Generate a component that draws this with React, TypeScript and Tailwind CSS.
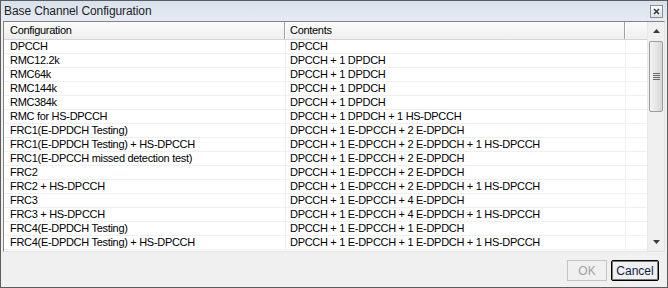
const rows: [string, string][] = [
  ["DPCCH", "DPCCH"],
  ["RMC12.2k", "DPCCH + 1 DPDCH"],
  ["RMC64k", "DPCCH + 1 DPDCH"],
  ["RMC144k", "DPCCH + 1 DPDCH"],
  ["RMC384k", "DPCCH + 1 DPDCH"],
  ["RMC for HS-DPCCH", "DPCCH + 1 DPDCH + 1 HS-DPCCH"],
  ["FRC1(E-DPDCH Testing)", "DPCCH + 1 E-DPCCH + 2 E-DPDCH"],
  ["FRC1(E-DPDCH Testing) + HS-DPCCH", "DPCCH + 1 E-DPCCH + 2 E-DPDCH + 1 HS-DPCCH"],
  ["FRC1(E-DPCCH missed detection test)", "DPCCH + 1 E-DPCCH + 2 E-DPDCH"],
  ["FRC2", "DPCCH + 1 E-DPCCH + 2 E-DPDCH"],
  ["FRC2 + HS-DPCCH", "DPCCH + 1 E-DPCCH + 2 E-DPDCH + 1 HS-DPCCH"],
  ["FRC3", "DPCCH + 1 E-DPCCH + 4 E-DPDCH"],
  ["FRC3 + HS-DPCCH", "DPCCH + 1 E-DPCCH + 4 E-DPDCH + 1 HS-DPCCH"],
  ["FRC4(E-DPDCH Testing)", "DPCCH + 1 E-DPCCH + 1 E-DPDCH"],
  ["FRC4(E-DPDCH Testing) + HS-DPCCH", "DPCCH + 1 E-DPCCH + 1 E-DPDCH + 1 HS-DPCCH"],
];

function Scrollbar() {
  return (
    <div className="flex w-[17px] shrink-0 flex-col bg-[#f0f0f0] border-l border-[#e8e8e8]">
      <div className="flex h-[18px] items-center justify-center">
        <svg width="7" height="4" viewBox="0 0 7 4">
          <path d="M3.5 0 L7 4 L0 4 Z" fill="#3c3c3c" />
        </svg>
      </div>
      <div className="mx-[1px] mt-[1px] flex h-[71px] items-center justify-center rounded-[2px] border border-[#9c9c9c] bg-gradient-to-r from-[#f4f4f4] via-[#e6e6e6] to-[#d6d6d6]">
        <div className="flex flex-col gap-[1px]">
          <div className="h-[1px] w-[7px] bg-[#6a6a6a]" />
          <div className="h-[1px] w-[7px] bg-[#6a6a6a]" />
          <div className="h-[1px] w-[7px] bg-[#6a6a6a]" />
          <div className="h-[1px] w-[7px] bg-[#6a6a6a]" />
        </div>
      </div>
      <div className="flex-1" />
      <div className="flex h-[18px] items-center justify-center">
        <svg width="7" height="4" viewBox="0 0 7 4">
          <path d="M0 0 L7 0 L3.5 4 Z" fill="#3c3c3c" />
        </svg>
      </div>
    </div>
  );
}

export default function App() {
  return (
    <div
      className="flex h-[288px] w-[668px] flex-col border border-[#5c5c5c] bg-[#f0f0f0] text-black"
      style={{ fontFamily: '"Liberation Sans", Arial, sans-serif' }}
    >
      <div className="flex h-[20px] shrink-0 items-center justify-between bg-gradient-to-b from-[#d8e1ec] to-[#e6ecf3] pl-[3px] pr-[4px]">
        <span className="text-[12px] tracking-[-0.1px] text-[#1e1e1e]">Base Channel Configuration</span>
        <div className="flex h-[13px] w-[13px] items-center justify-center border border-[#8a8f96] bg-gradient-to-b from-[#fafafa] to-[#dfe4ea]">
          <svg width="7" height="7" viewBox="0 0 7 7">
            <path d="M1 1 L6 6 M6 1 L1 6" stroke="#3a3a3a" strokeWidth="1.6" />
          </svg>
        </div>
      </div>

      <div className="flex flex-1 flex-col px-[2px]">
        <div className="flex h-[231px] shrink-0 border border-t-[#828282] border-l-[#828282] border-r-[#e3e3e3] border-b-[#e3e3e3] bg-white">
          <div className="flex min-w-0 flex-1 flex-col tracking-[-0.3px]">
            <div className="flex h-[18px] shrink-0 border-b border-[#d5d5d5] bg-gradient-to-b from-[#fbfbfb] to-[#eeeeee] text-[11px]">
              <div className="flex w-[281px] shrink-0 items-center border-r border-[#a0a0a0] pl-[6px]">Configuration</div>
              <div className="flex w-[340px] shrink-0 items-center border-r border-[#a0a0a0] border-l border-l-white pl-[4px]">Contents</div>
              <div className="flex-1 border-l border-white" />
            </div>
            {rows.map(([a, b], i) => (
              <div key={i} className="flex h-[14px] shrink-0 border-b border-[#f0f0f0] text-[11px] leading-[13px]">
                <div className="w-[282px] shrink-0 truncate border-r border-[#f0f0f0] pl-[6px]">{a}</div>
                <div className="w-[340px] shrink-0 truncate border-r border-[#f0f0f0] pl-[4px]">{b}</div>
                <div className="flex-1" />
              </div>
            ))}
          </div>
          <Scrollbar />
        </div>

        <div className="flex flex-1 items-center justify-end gap-[4px] pr-[6px] pt-[2px] text-[12px]">
          <div className="flex h-[21px] w-[40px] items-center justify-center border border-[#c4c4c4] bg-[#f0f0f0] text-[#a2a2a2]">OK</div>
          <div className="flex h-[21px] w-[48px] items-center justify-center rounded-[2px] border border-black bg-[#f0f0f0] text-[#0b1e46] shadow-[inset_0_0_0_1px_#7a7a7a]">Cancel</div>
        </div>
      </div>
    </div>
  );
}
